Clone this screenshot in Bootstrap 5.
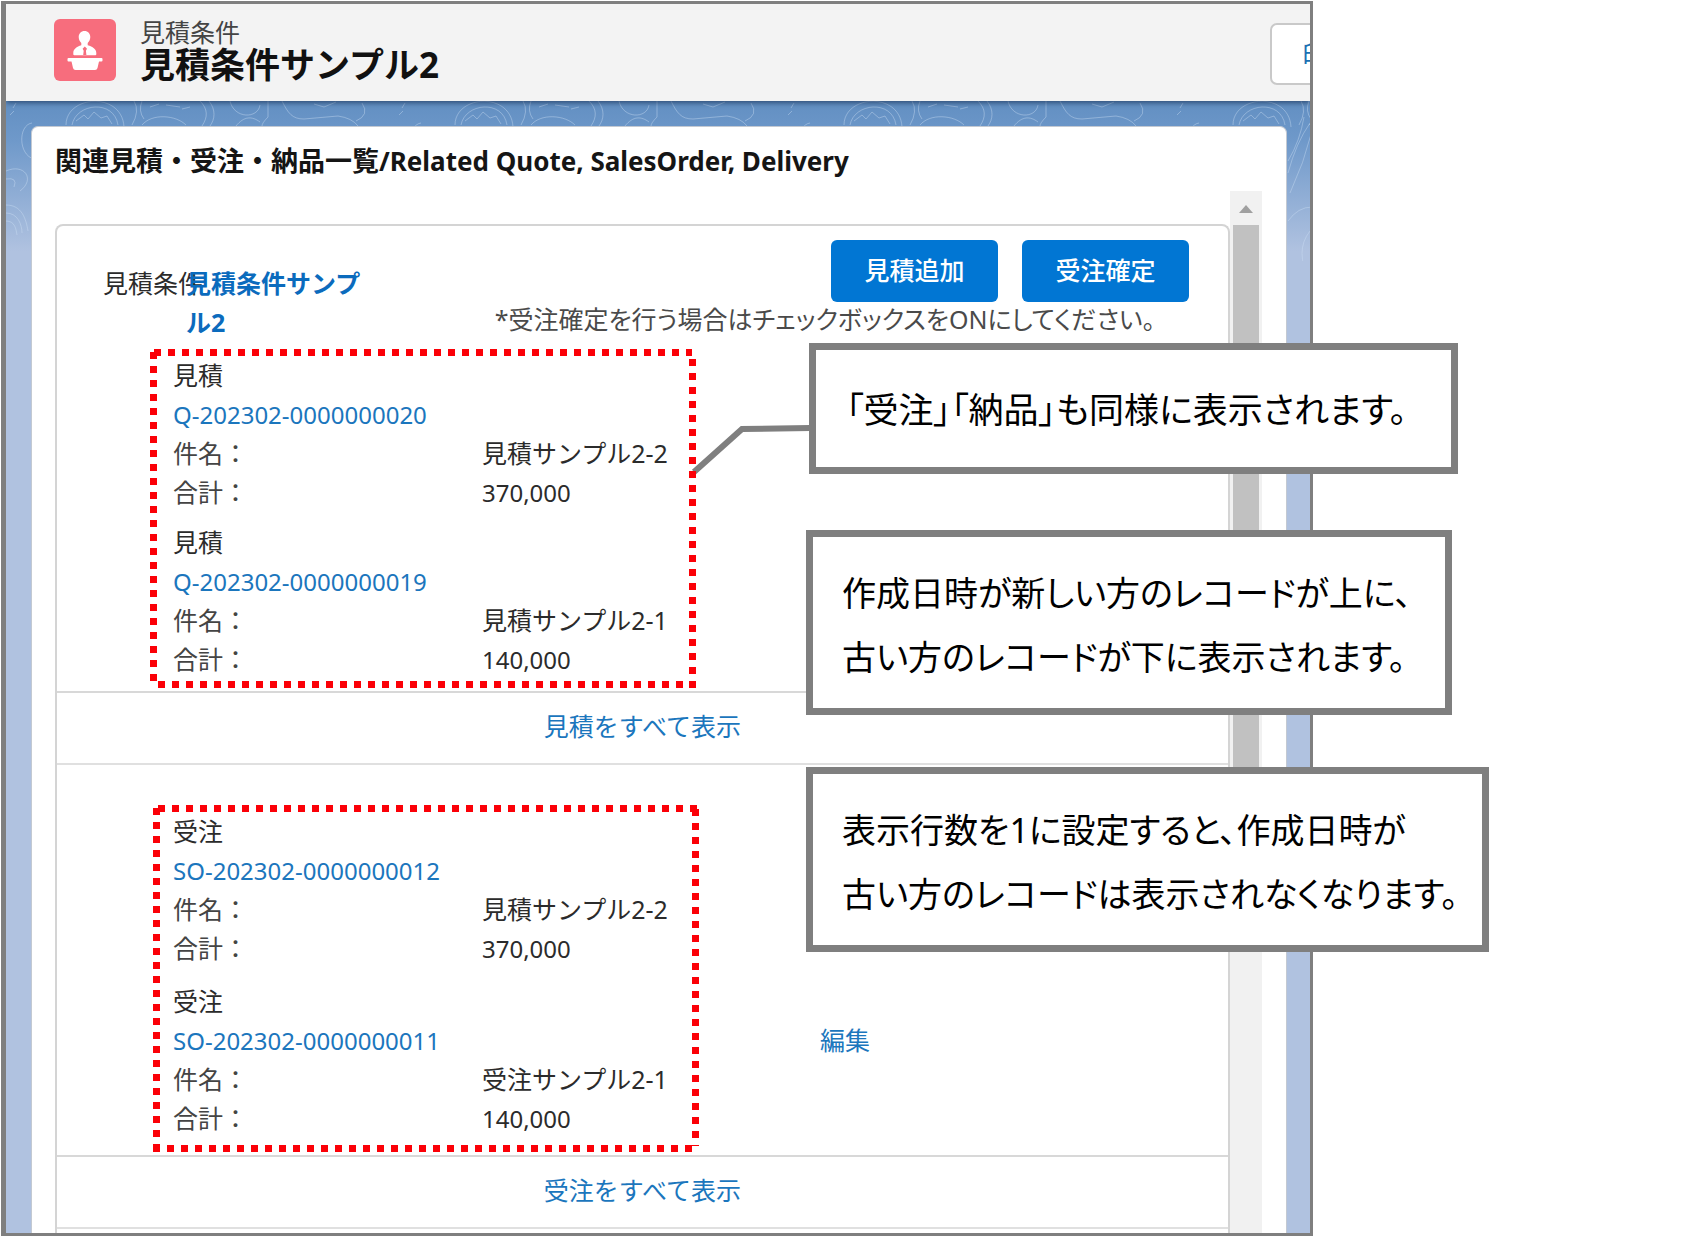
<!DOCTYPE html>
<html lang="ja">
<head>
<meta charset="utf-8">
<meta name="viewport" content="width=device-width, initial-scale=1">
<title>見積条件サンプル2</title>
<link href="https://cdn.jsdelivr.net/npm/bootstrap@5.3.0/dist/css/bootstrap.min.css" rel="stylesheet">
<style>
  body { font-family: "Noto Sans", "Noto Sans CJK JP", sans-serif; font-size: 25px; line-height: 39px; color: #2b2b2b; background: #fff; }
  a { color: #1b76bd; text-decoration: none; }
  .stage { padding: 1px; }
  .app-frame { max-width: 1312px; border: 3px solid #7f7f7f; border-left-width: 5px; overflow: hidden; background: #b0c2e0; }
  .page-head { height: 97px; background: #f3f3f3; padding: 0 0 0 48px; box-shadow: 0 2px 5px rgba(20,45,80,.65); z-index: 1; }
  .head-icon { width: 62px; height: 62px; border-radius: 6px; background: #f76d7d; margin-top: 15px; }
  .head-text { margin-left: 24px; padding-top: 14px; }
  .head-type { line-height: 28px; color: #444; }
  .head-name { font-size: 35px; line-height: 38px; font-weight: 700; color: #111; margin: 0; }
  .head-btn { width: 180px; height: 62px; margin: 19px -140px 0 auto; border: 2px solid #c9c9c9; border-radius: 7px; background: #fff; color: #1b6fb3; font-size: 25px; line-height: 39px; text-align: left; padding: 0 0 0 30px; }
  .canvas-bg { padding: 25px 23px 0 25px; background: linear-gradient(#628fc2 0, #6f99ca 40px, #b0c2e0 150px); }
  .contours { top: 0; left: 0; height: 160px; }
  .panel { border: 1px solid #c3c9d2; border-bottom: 0; border-radius: 7px 7px 0 0; background: #fff; padding: 19px 24px 0 23px; }
  .panel-title { font-size: 27px; line-height: 30px; font-weight: 700; margin: 0 0 15px; color: #151515; }
  .title-en { font-size: 26px; }
  .record-list { margin-top: 33px; border: 2px solid #d4d4d4; border-bottom: 0; border-radius: 8px 8px 0 0; padding-bottom: 4px; }
  .scroll-track { width: 32px; background: #f1f1f1; }
  .scroll-arrow { height: 34px; padding-top: 14px; }
  .scroll-thumb { width: 26px; height: 640px; background: #c1c1c1; }
  .cond-name { padding: 38px 0 0 46px; }
  .cond-label { width: 83px; }
  .cond-link { width: 176px; font-weight: 700; color: #0b6bbd; }
  .cond-actions { padding: 14px 39px 0 0; }
  .btn-act { width: 167px; height: 62px; border: 0; border-radius: 6px; background: #0176d3; color: #fff; font-size: 25px; font-weight: 500; }
  .btn-act:hover { background: #0161b0; color: #fff; }
  .act-note { line-height: 34px; color: #4a4a4a; font-feature-settings: "palt"; padding-right: 34px; }
  .group { padding-left: 116px; border-bottom: 2px solid #d8d8d8; }
  .group-quote { padding-top: 14px; padding-bottom: 12px; gap: 11px; }
  .group-order { padding-top: 47px; padding-bottom: 17px; gap: 14px; }
  .code-col { width: 647px; font-size: 24px; }
  .key-col { width: 309px; color: #444; }
  .amount { font-size: 24px; }
  .show-all { height: 72px; padding-bottom: 4px; border-bottom: 2px solid #e0e0e0; }
  .dots { fill: none; stroke: #fb0007; stroke-width: 7; stroke-dasharray: 7 7; }
  .dots-quote { left: 150px; top: 349px; width: 546px; height: 339px; z-index: 3; }
  .dots-order { left: 153px; top: 805px; width: 546px; height: 347px; z-index: 3; }
  .leader { left: 686px; top: 420px; z-index: 2; }
  .callout-box { border: 7px solid #7f7f7f; background: #fff; color: #000; font-size: 34px; line-height: 64px; font-feature-settings: "palt"; z-index: 4; }
  .callout-a { left: 809px; top: 343px; width: 649px; padding: 28px 30px 25px; font-size: 35px; }
  .callout-b { left: 806px; top: 530px; width: 646px; padding: 24px 29px 19px; }
  .callout-c { left: 806px; top: 767px; width: 683px; padding: 24px 29px 19px; }
</style>
</head>
<body>
<div class="stage position-relative">
  <main class="app-frame">
    <header class="page-head d-flex align-items-start position-relative">
      <svg class="head-icon flex-shrink-0" viewBox="0 0 62 62" aria-hidden="true">
        <g fill="#fff">
          <path d="M30.500 12c3.500 0 5.800 2.700 5.800 6 0 2.500-1.200 4.700-2.600 6v2.200c5 1.400 8.600 3.800 8.600 7.800v1.200q0 1-1 1H20.300q-1 0-1-1V34c0-4 3.400-6.400 8-7.800V24c-1.400-1.300-2.600-3.500-2.600-6 0-3.300 2.300-6 5.800-6z"/>
          <path d="M14.500 39h33q1 0 1 1v1.500q0 1-1 1H45l-1.500 6.500q-.5 2-2.500 2H21.500q-2 0-2.500-2l-1.500-6.500h-3q-1 0-1-1V40q0-1 1-1z"/>
        </g>
        <path fill="#f76d7d" d="M30.800 27.500l2.200 2.200-1.100 2 .5 4.300h-3.200l.5-4.300-1.100-2z"/>
      </svg>
      <div class="head-text text-nowrap">
        <div class="head-type">見積条件</div>
        <h1 class="head-name">見積条件サンプル2</h1>
      </div>
      <button type="button" class="head-btn flex-shrink-0">印刷</button>
    </header>

    <div class="canvas-bg position-relative">
      <svg class="contours position-absolute w-100" aria-hidden="true">
        <defs>
          <pattern id="topo" width="389" height="160" patternUnits="userSpaceOnUse">
            <g fill="none" stroke="#cfe0f4" stroke-opacity=".4" stroke-width="1">
              <path d="M60 24c0-30 56-34 58 2M66 24c4-22 42-26 46 0M70 20l8-6 4 4 6-7 7 6 6-2 5 8"/>
              <path d="M128 0q6 10-2 24M136 0q-4 10 2 18M136 24c10-12 34-10 44 0M144 6l9-3M160 4l14 2M176 8l8-2"/>
              <path d="M194 0c8 8 8 16 2 25M203 0c7 9 6 18 1 25M224 0c4 18 28 18 30 4M230 25c8-10 16-10 24-4M262 0v16q-6 6-6 9"/>
              <path d="M276 0c6 12 10 18 22 18l34-3q14 2 20 10M308 3l10 3 12-5M356 2q8 12-6 18"/>
              <path d="M26 22c-14 2-14 32 2 36M0 70c18-8 30 8 14 20M0 78q12-2 8 8M0 104c16 0 20 14 22 26M0 112c12 0 16 12 16 20M0 120c9 0 10 8 11 14M4 14l4-4M10 2l-3 5"/>
            </g>
          </pattern>
        </defs>
        <rect width="100%" height="160" fill="url(#topo)"/>
        <g fill="none" stroke="#cfe0f4" stroke-opacity=".4">
          <path d="M1282 72q8-30 22-50M1284 92q14-30 22-62M1282 120q10-14 24-14M1304 130q-16 20 0 50M1282 60q12-20 16-44"/>
        </g>
      </svg>

      <section class="panel position-relative">
        <h2 class="panel-title text-nowrap">関連見積・受注・納品一覧<span class="title-en">/Related Quote, SalesOrder, Delivery</span></h2>
        <div class="d-flex">
          <div class="record-list flex-grow-1">
            <div class="d-flex justify-content-between">
              <div class="cond-name d-flex">
                <div class="cond-label text-nowrap">見積条件</div>
                <a href="#" class="cond-link">見積条件サンプル2</a>
              </div>
              <div class="cond-actions text-end text-nowrap">
                <div class="d-flex justify-content-end gap-4">
                  <button type="button" class="btn btn-act p-0">見積追加</button>
                  <button type="button" class="btn btn-act p-0">受注確定</button>
                </div>
                <div class="act-note">*受注確定を行う場合はチェックボックスをONにしてください。</div>
              </div>
            </div>

            <div class="group group-quote d-flex flex-column text-nowrap">
              <div>
                <div>見積</div>
                <div class="d-flex"><div class="code-col"><a href="#">Q-202302-0000000020</a></div></div>
                <div class="d-flex"><div class="key-col">件名：</div><div>見積サンプル2-2</div></div>
                <div class="d-flex"><div class="key-col">合計：</div><div class="amount">370,000</div></div>
              </div>
              <div>
                <div>見積</div>
                <div class="d-flex"><div class="code-col"><a href="#">Q-202302-0000000019</a></div></div>
                <div class="d-flex"><div class="key-col">件名：</div><div>見積サンプル2-1</div></div>
                <div class="d-flex"><div class="key-col">合計：</div><div class="amount">140,000</div></div>
              </div>
            </div>
            <div class="show-all d-flex align-items-center justify-content-center"><a href="#">見積をすべて表示</a></div>

            <div class="group group-order d-flex flex-column text-nowrap">
              <div>
                <div>受注</div>
                <div class="d-flex"><div class="code-col"><a href="#">SO-202302-0000000012</a></div></div>
                <div class="d-flex"><div class="key-col">件名：</div><div>見積サンプル2-2</div></div>
                <div class="d-flex"><div class="key-col">合計：</div><div class="amount">370,000</div></div>
              </div>
              <div>
                <div>受注</div>
                <div class="d-flex"><div class="code-col"><a href="#">SO-202302-0000000011</a></div><a href="#">編集</a></div>
                <div class="d-flex"><div class="key-col">件名：</div><div>受注サンプル2-1</div></div>
                <div class="d-flex"><div class="key-col">合計：</div><div class="amount">140,000</div></div>
              </div>
            </div>
            <div class="show-all d-flex align-items-center justify-content-center"><a href="#">受注をすべて表示</a></div>
          </div>

          <div class="scroll-track flex-shrink-0" aria-hidden="true">
            <div class="scroll-arrow text-center lh-1">
              <svg class="d-block mx-auto" width="14" height="8" viewBox="0 0 14 8"><path fill="#a0a0a0" d="M7 0l7 8H0z"/></svg>
            </div>
            <div class="scroll-thumb mx-auto"></div>
          </div>
        </div>
      </section>
    </div>
  </main>

  <svg class="leader position-absolute pe-none" width="130" height="60" aria-hidden="true"><path d="M8 52L56 9L124 8" fill="none" stroke="#7f7f7f" stroke-width="6"/></svg>
  <svg class="dots-quote position-absolute pe-none" viewBox="0 0 546 339" aria-hidden="true"><path class="dots" d="M4 3.500H542M542.500 10V339M8 335.500H546M3.500 3V332"/></svg>
  <svg class="dots-order position-absolute pe-none" viewBox="0 0 546 347" aria-hidden="true"><path class="dots" d="M5 3.500H546M542.500 4V341M0 343.500H542M3.500 3V347"/></svg>

  <aside class="callout-box callout-a position-absolute text-nowrap">「受注」「納品」も同様に表示されます。</aside>
  <aside class="callout-box callout-b position-absolute text-nowrap">作成日時が新しい方のレコードが上に、<br>古い方のレコードが下に表示されます。</aside>
  <aside class="callout-box callout-c position-absolute text-nowrap">表示行数を1に設定すると、作成日時が<br>古い方のレコードは表示されなくなります。</aside>
</div>
<script src="https://cdn.jsdelivr.net/npm/bootstrap@5.3.0/dist/js/bootstrap.bundle.min.js"></script>
</body>
</html>
